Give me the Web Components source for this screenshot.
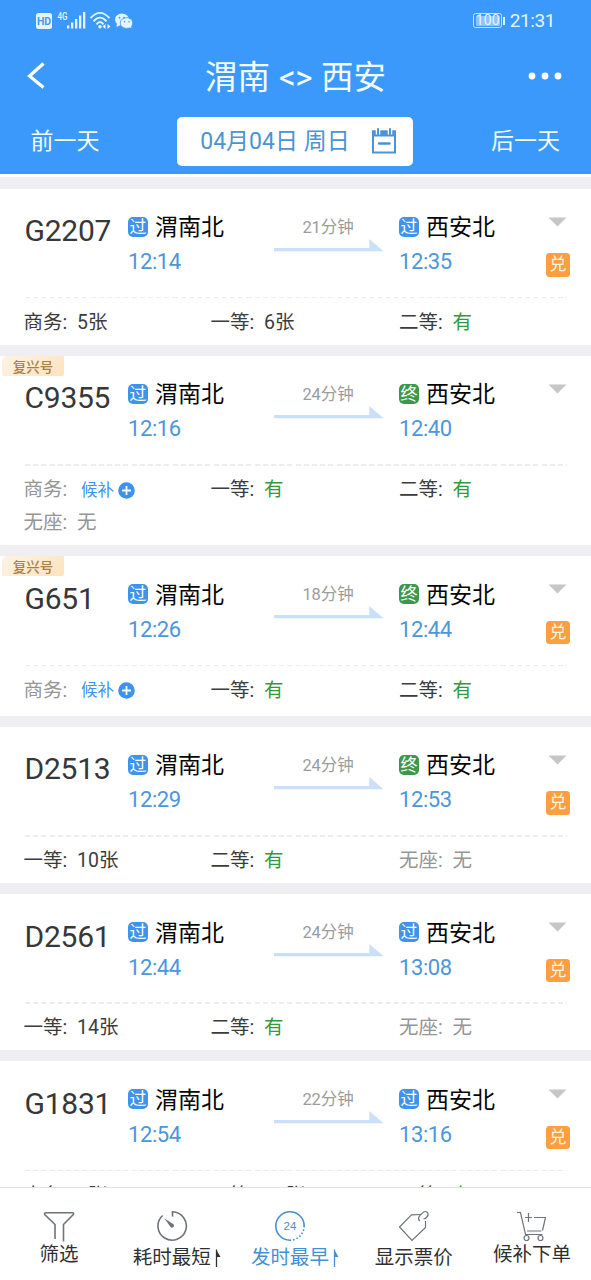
<!DOCTYPE html>
<html lang="zh-CN">
<head>
<meta charset="utf-8">
<title>渭南 - 西安</title>
<style>
html,body{margin:0;height:100%;overflow:hidden}
body{font-family:Roboto,"Noto Sans CJK SC",sans-serif;background:#fff}
</style>
</head>
<body>
<ticket-app></ticket-app>
<script>
const define = (name, html, setup) => {
  const t = document.createElement('template');
  t.innerHTML = html;
  customElements.define(name, class extends HTMLElement {
    connectedCallback() {
      if (this.shadowRoot) return;
      this.attachShadow({ mode: 'open' }).append(t.content.cloneNode(true));
      if (setup) setup(this, this.shadowRoot);
    }
  });
};

define('status-bar', `
<style>
:host{display:flex;height:40px;box-sizing:border-box;padding:0 36px 0 35px;justify-content:space-between;color:#e3f6ff}
svg{display:block}
.right{display:flex;align-items:center;height:41px;font-size:19px;letter-spacing:-.4px;line-height:41px}
.bat{position:relative;width:27px;height:13px;border:1px solid #c4e3ff;border-radius:2.5px;margin-right:7.500px;display:flex;align-items:center;justify-content:center;font-size:14px;line-height:15px;letter-spacing:.1px}
.bat::before{content:"";position:absolute;inset:1.5px;background:#8ec3fb;border-radius:1px}
.bat::after{content:"";position:absolute;right:-4px;top:3px;width:2px;height:8px;background:#e3f6ff}
.bat span{position:relative;top:0}
</style>
<svg width="100" height="40" viewBox="0 0 100 40" fill="#e3f6ff">
 <rect x="1" y="13" width="16" height="16" rx="2.5"/>
 <text x="9" y="25" text-anchor="middle" font-family="Roboto" font-weight="700" font-size="10.5" fill="#4a98e6">HD</text>
 <text x="22.5" y="19.5" font-family="Roboto" font-weight="500" font-size="10.5" textLength="10" lengthAdjust="spacingAndGlyphs">4G</text>
 <rect x="32" y="25.500" width="2.300" height="3"/><rect x="36" y="22.500" width="2.300" height="6"/><rect x="40" y="19" width="2.300" height="9.500"/><rect x="44" y="15.500" width="2.300" height="13"/><rect x="48" y="12" width="2.300" height="16.500"/>
 <g fill="none" stroke="#e3f6ff" stroke-width="1.900"><path d="M55.500 18.200Q65 7.500 74.500 18.200"/><path d="M58.500 21.400Q65 13.800 71.500 21.400"/><path d="M61.500 24.300Q65 19.800 68.500 24.300"/></g>
 <circle cx="65" cy="26.700" r="1.800"/><path d="M70.500 24v5l-3-2.500zM72.500 24v5l3-2.500z"/>
 <ellipse cx="87" cy="19.500" rx="7" ry="6"/><path d="M82 23l-.5 4 4-2z"/>
 <ellipse cx="91.500" cy="23" rx="6.300" ry="5.400" stroke="#3c99fc" stroke-width=".8"/><path d="M93 27l3.500 1-.8-3z"/>
 <g fill="#3c99fc"><circle cx="84.500" cy="17.700" r=".9"/><circle cx="89" cy="17.700" r=".9"/><circle cx="89.500" cy="21.800" r=".8"/><circle cx="94" cy="21.800" r=".8"/></g>
</svg>
<div class="right"><div class="bat"><span>100</span></div><span>21:31</span></div>`);

define('nav-header', `
<style>
:host{display:block;background:#3c99fc;height:174px;color:#f2fcff;flex:none}
.title{display:grid;grid-template-columns:100px 1fr 100px;height:72px;align-items:center}
h1{margin:0;font-size:32.500px;font-weight:400;text-align:center;line-height:68px;height:68px;white-space:nowrap;padding-top:4px}
h1 i{font-style:normal;font-size:33px;margin:0 1px;letter-spacing:-.5px}
svg{display:block}
.dots{justify-self:end;margin-right:29px}
.days{display:flex;justify-content:space-between;height:57px;line-height:59px;padding:0 31px 0 30.500px;font-size:23px}
.date{box-sizing:border-box;display:flex;align-items:center;width:236px;height:49px;margin:4.500px 0 0 0;padding:0 16px 0 23px;border-radius:5px;background:#fff;color:#4b93d5;font-size:23px;line-height:47px;justify-content:space-between;white-space:nowrap}
</style>
<status-bar></status-bar>
<div class="title">
 <svg width="60" height="72" viewBox="0 0 60 72"><path d="M43.500 23.500L29.500 36L43.500 47.500" fill="none" stroke="#fff" stroke-width="3.200"/></svg>
 <h1>渭南 <i>&lt;&gt;</i> 西安</h1>
 <svg class="dots" width="34" height="8" viewBox="0 0 34 8" fill="#fff"><circle cx="4" cy="4" r="3.400"/><circle cx="17" cy="4" r="3.400"/><circle cx="30" cy="4" r="3.400"/></svg>
</div>
<div class="days"><span>前一天</span>
 <div class="date"><span>04月04日 周日</span>
 <svg width="26" height="26" viewBox="0 0 26 26"><path d="M2 3.500H24V24.500H2Z" fill="none" stroke="#4b93d5" stroke-width="2"/><path d="M1 2.500h24v6H1z" fill="#4b93d5"/><path d="M7 0v6.500M19 0v6.500" stroke="#fff" stroke-width="4.500"/><path d="M7 1v5M19 1v5" stroke="#4b93d5" stroke-width="2" stroke-linecap="round"/><path d="M8 15.500h10.500" stroke="#4b93d5" stroke-width="2.500" stroke-linecap="round"/></svg></div>
 <span>后一天</span></div>`);

define('station-stop', `
<style>
:host{display:block}
.name{display:flex;align-items:center;height:30px;font-size:23px;line-height:30px;color:#050505}
.name slot{display:block;padding-top:2px}
.tag{width:20px;height:20px;border-radius:5px;background:#4093eb;color:#fff;font-size:17px;line-height:20.500px;text-align:center;margin:-1px 7px 0 0;flex:none}
:host([kind="终"]) .tag{background:#3c9848}
.time{font-size:22px;line-height:30px;margin-top:5px;color:#4b96dc;letter-spacing:-.4px}
</style>
<div class="name"><span class="tag"></span><slot></slot></div><div class="time"></div>`, (el, r) => {
  r.querySelector('.tag').textContent = el.getAttribute('kind');
  r.querySelector('.time').textContent = el.getAttribute('time');
});

define('trip-arrow', `
<style>
:host{display:block;text-align:center;font-size:16.500px;line-height:24px;color:#9c9c9c}
slot{display:block;height:24px;margin-right:2px;letter-spacing:-.1px}
svg{display:block;margin-top:-1px}
</style>
<slot></slot>
<svg width="110" height="13" viewBox="0 0 110 13"><path d="M0 9H95.300V0L109.500 12.300H0Z" fill="#c9dffa"/></svg>`);

define('seat-info', `
<style>
:host{display:flex;align-items:center;height:30px;font-size:19.500px;line-height:32px;color:#3c3c3c;white-space:nowrap}
:host([state="none"]),:host([state="wait"]) .label{color:#959595}
:host([state="wait"]){height:33px}
.label,.value{height:30px}
.label{width:53.500px}
:host([state="yes"]) .value{color:#319a3c}
:host([state="wait"]) .label,:host([state="wait"]) .value{height:33px}
:host([state="wait"]) .value{display:flex;align-items:center;color:#4193ea;font-size:16.500px;margin-left:4px}
svg{display:none;margin:-1px 0 0 4px}
:host([state="wait"]) svg{display:block}
</style>
<span class="label"></span><span class="value"><slot></slot><svg width="17" height="17" viewBox="0 0 17 17"><circle cx="8.500" cy="8.500" r="8.300" fill="#3d92eb"/><path d="M8.500 4v9M4 8.500h9" stroke="#fff" stroke-width="1.800"/></svg></span>`, (el, r) => {
  r.querySelector('.label').textContent = el.getAttribute('label') + ':';
});

define('train-card', `
<style>
:host{display:block;position:relative;background:#fff;flex:none}
.trip{box-sizing:border-box;display:grid;grid-template-columns:104px 146px 110px 146px 24px;height:108.400px;padding-left:24px}
.no{font-size:30px;line-height:34px;margin:25.500px 0 0 .5px;color:#373737;letter-spacing:-.25px}
trip-arrow{margin-top:27px}
.side{display:flex;flex-direction:column;align-items:center;padding-top:28px;margin-left:16px;width:24px}
.side svg{display:block;margin-right:2px}
.dui{margin-top:26.500px;width:24px;height:23.500px;border-radius:3.500px;background:#fd9f40;color:#fff5df;font-size:17px;line-height:22px;text-align:center}
.rule{height:1.500px;margin:0 24px 0 25px;background:repeating-linear-gradient(90deg,#ededed 0 5px,transparent 5px 8.200px)}
.seats{display:grid;grid-template-columns:187px 188.500px 1fr;padding:8.400px 0 8.100px 23.500px;align-items:start}
.fx{position:absolute;left:2px;top:0;width:62px;height:20px;border-radius:5px 0 2px 2px;background:linear-gradient(135deg,#fff2e3,#fde3bf);color:#a88047;font-size:13.500px;line-height:22px;text-align:center;font-weight:500}
[hidden]{display:none}
::slotted([slot]){margin-top:23.500px}
::slotted([slot="to"]){margin-left:15px}
</style>
<span class="fx">复兴号</span>
<div class="trip"><div class="no"></div><slot name="from"></slot><trip-arrow></trip-arrow><slot name="to"></slot>
<div class="side"><svg width="19" height="10" viewBox="0 0 19 10"><path d="M.5.500H18.500L9.500 9.500Z" fill="#c6c6c6"/></svg><div class="dui">兑</div></div></div>
<div class="rule"></div><div class="seats"><slot></slot></div>`, (el, r) => {
  r.querySelector('.no').textContent = el.getAttribute('number');
  r.querySelector('trip-arrow').textContent = el.getAttribute('minutes') + '分钟';
  r.querySelector('.fx').hidden = !el.hasAttribute('fuxing');
  r.querySelector('.dui').hidden = !el.hasAttribute('exchange');
});

define('tab-item', `
<style>
:host{display:flex;flex-direction:column;align-items:center;color:#2f3033}
.icon{height:32px;margin-top:22px}
.label{display:flex;align-items:center;font-size:19.500px;line-height:26px;white-space:nowrap;margin-top:0}
:host([sort]) .icon{margin-right:10px}
:host([low]) .label{margin-top:3px}
:host([active]){color:#4590d2}
.up{display:none;margin-left:4px}
:host([sort]) .up{display:block}
</style>
<div class="icon"><slot name="icon"></slot></div><div class="label"><slot></slot><svg class="up" width="7" height="20" viewBox="0 0 7 20"><path d="M1.500 1.500V19" stroke="currentColor" stroke-width="1.300"/><path d="M1.500 2L5.500 9H1.500Z" fill="currentColor"/></svg></div>`);

define('tab-bar', `
<style>
:host{display:grid;grid-template-columns:repeat(5,1fr);height:93px;box-sizing:border-box;border-top:1.500px solid #e2e2e2;background:#fff;flex:none}
svg{display:block;fill:none;stroke:#6d7479;stroke-width:1.600}
</style>
<tab-item><svg slot="icon" width="32" height="32" viewBox="0 0 32 32"><path d="M12 29V14.500L1.700 4.500Q1 2.800 3 2.800H29.500Q31.200 2.800 30.300 4.500L20.500 14.500V31.500"/></svg>筛选</tab-item>
<tab-item sort low><svg slot="icon" width="32" height="32" viewBox="0 0 32 32"><path d="M16.500 6.500V1.800A14.200 14.200 0 1 1 6.600 5.500"/><path d="M8.500 8.500L17.500 14.200A2 2 0 1 1 14.500 17Z" fill="#6d7479" stroke="none"/></svg>耗时最短</tab-item>
<tab-item sort low active><svg slot="icon" width="32" height="32" viewBox="0 0 32 32" style="stroke:#4590d2"><path d="M16 30.200A14.200 14.200 0 1 1 30.200 16"/><path d="M30.200 16A14.200 14.200 0 0 1 16 30.200" stroke-dasharray="1.500 2"/><text x="16" y="20" text-anchor="middle" font-family="Liberation Sans" font-size="11.500" fill="#4590d2" stroke="none">24</text></svg>发时最早</tab-item>
<tab-item low><svg slot="icon" width="32" height="32" viewBox="0 0 32 32" style="stroke-width:1.200"><path d="M22.500 4.500L13.500 4.800L1.500 17L14 30.500L27.500 17.500V11"/><path d="M22 11C18.500 9 22 5 24 3.500C26 .8 29 .8 30 3.500C30.500 6 28 8.500 25.500 9"/></svg>显示票价</tab-item>
<tab-item><svg slot="icon" width="32" height="32" viewBox="0 0 32 32" style="stroke-width:1.200"><path d="M1 2.500H4.500L9.500 24.500H26.500M18 7.500H29.500L26.500 20.500M11 21H25.500M12.500 3V12M9 7.500H16"/><circle cx="10.500" cy="28" r="2.500"/><circle cx="24.500" cy="28" r="2.500"/></svg>候补下单</tab-item>`);

const trains = [
  ['G2207', 21, '12:14', '12:35', '过', '', 'exchange', [['商务','5张'],['一等','6张'],['二等','有','yes']]],
  ['C9355', 24, '12:16', '12:40', '终', 'fuxing', '', [['商务','候补','wait'],['一等','有','yes'],['二等','有','yes'],['无座','无','none']]],
  ['G651', 18, '12:26', '12:44', '终', 'fuxing', 'exchange', [['商务','候补','wait'],['一等','有','yes'],['二等','有','yes']]],
  ['D2513', 24, '12:29', '12:53', '终', '', 'exchange', [['一等','10张'],['二等','有','yes'],['无座','无','none']]],
  ['D2561', 24, '12:44', '13:08', '过', '', 'exchange', [['一等','14张'],['二等','有','yes'],['无座','无','none']]],
  ['G1831', 22, '12:54', '13:16', '过', '', 'exchange', [['商务','5张'],['一等','11张'],['二等','有','yes']]]
];

define('ticket-app', `
<style>
:host{display:flex;flex-direction:column;width:591px;height:1280px;overflow:hidden}
main{flex:1;min-height:0;overflow:hidden;display:flex;flex-direction:column;gap:11px;background:#efeef3;border-top:3px solid #fff;padding-top:11.500px;box-sizing:border-box}
</style>
<nav-header></nav-header><main></main><tab-bar></tab-bar>`, (el, r) => {
  r.querySelector('main').innerHTML = trains.map(([no, min, dep, arr, kind, fx, ex, seats]) => `
<train-card number="${no}" minutes="${min}" ${fx} ${ex}><station-stop slot="from" kind="过" time="${dep}">渭南北</station-stop><station-stop slot="to" kind="${kind}" time="${arr}">西安北</station-stop>${seats.map(([l, v, s = 'count']) => `<seat-info label="${l}" state="${s}">${v}</seat-info>`).join('')}</train-card>`).join('');
});
</script>
</body>
</html>
